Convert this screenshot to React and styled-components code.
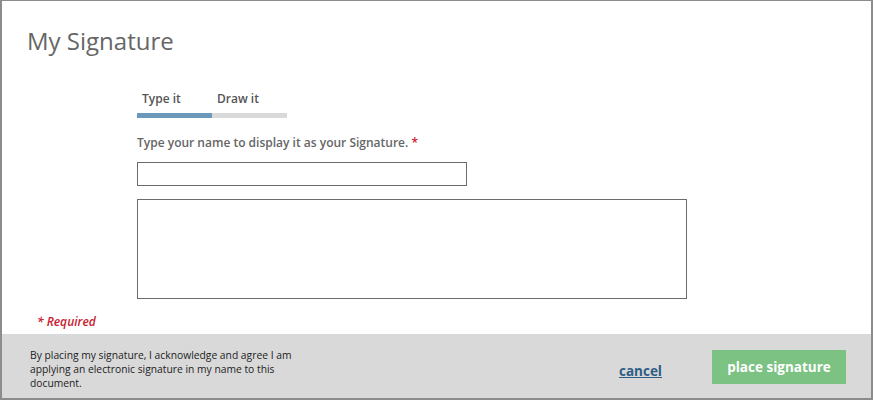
import React, { useState } from "react";
import styled, { createGlobalStyle } from "styled-components";

const Global = createGlobalStyle`
  html, body { margin: 0; padding: 0; background: #fff; }
  body { font-family: "Open Sans", "Liberation Sans", sans-serif; }
  * { box-sizing: border-box; }
`;

const Frame = styled.div`
  width: 873px;
  height: 400px;
  border-style: solid;
  border-color: #8c8c8c;
  border-width: 1px 2px 2px 2px;
  display: flex;
  flex-direction: column;
  background: #fff;
`;

const Title = styled.h1`
  margin: 0;
  padding: 24px 0 0 25px;
  font-size: 24px;
  line-height: 32px;
  font-weight: 400;
  color: #666;
`;

const Body = styled.div`
  flex: 1;
  padding: 34px 0 0 135px;
  display: flex;
  flex-direction: column;
`;

const Tabs = styled.div`
  display: flex;
`;

const Tab = styled.button`
  width: 75px;
  padding: 0 0 6px 5px;
  margin: 0;
  border: none;
  border-bottom: 5px solid ${(p) => (p.$active ? "#6b99b9" : "#d9d9d9")};
  background: none;
  text-align: left;
  font-family: inherit;
  font-size: 12px;
  line-height: 16px;
  font-weight: 600;
  color: #555;
  cursor: pointer;
`;

const Label = styled.label`
  margin-top: 17px;
  font-size: 12px;
  line-height: 16px;
  font-weight: 600;
  color: #666;
`;

const Star = styled.span`
  color: #c8202f;
`;

const NameInput = styled.input`
  margin-top: 11px;
  width: 330px;
  height: 24px;
  border: 1px solid #6b6b6b;
  border-radius: 0;
  padding: 0 6px;
  font-family: inherit;
  font-size: 13px;
  outline: none;
`;

const Preview = styled.div`
  margin-top: 13px;
  width: 550px;
  height: 100px;
  border: 1px solid #6b6b6b;
`;

const Required = styled.div`
  margin: 15px 0 0 -100px;
  font-size: 12px;
  line-height: 16px;
  font-weight: 600;
  font-style: italic;
  color: #c8202f;
`;

const Footer = styled.div`
  height: 64px;
  background: #d9d9d9;
  display: flex;
  align-items: flex-start;
  padding: 14px 25px 0 28px;
`;

const Notice = styled.p`
  margin: 0;
  width: 290px;
  font-size: 10.3px;
  line-height: 14px;
  color: #222;
  flex: none;
`;

const Actions = styled.div`
  margin-left: auto;
  display: flex;
  align-items: center;
  gap: 50px;
  margin-top: 2px;
`;

const Cancel = styled.a`
  font-size: 13.5px;
  font-weight: 700;
  color: #2e5d86;
  text-decoration: underline;
  margin-top: 8px;
  cursor: pointer;
`;

const PlaceButton = styled.button`
  width: 134px;
  height: 34px;
  border: none;
  background: #7bc283;
  color: #fff;
  font-family: inherit;
  font-size: 13.5px;
  font-weight: 700;
  cursor: pointer;
`;

export default function App() {
  const [tab, setTab] = useState("type");
  return (
    <>
      <Global />
      <Frame>
        <Title>My Signature</Title>
        <Body>
          <Tabs>
            <Tab $active={tab === "type"} onClick={() => setTab("type")}>Type it</Tab>
            <Tab $active={tab === "draw"} onClick={() => setTab("draw")}>Draw it</Tab>
          </Tabs>
          <Label>
            Type your name to display it as your Signature. <Star>*</Star>
          </Label>
          <NameInput type="text" />
          <Preview />
          <Required>* Required</Required>
        </Body>
        <Footer>
          <Notice>
            By placing my signature, I acknowledge and agree I am applying an electronic signature in my name to this document.
          </Notice>
          <Actions>
            <Cancel>cancel</Cancel>
            <PlaceButton>place signature</PlaceButton>
          </Actions>
        </Footer>
      </Frame>
    </>
  );
}
